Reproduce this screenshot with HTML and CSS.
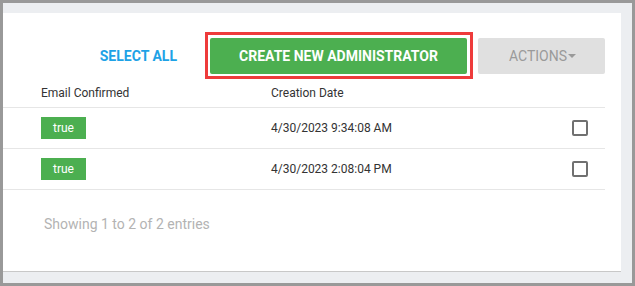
FILE: index.html
```html
<!DOCTYPE html>
<html>
<head>
<meta charset="utf-8">
<link rel="stylesheet" href="styles.css">
</head>
<body>
<div class="frame">
  <div class="panel">
    <div class="toolbar">
      <a class="select-all">SELECT ALL</a>
      <div class="highlight">
        <button class="btn-create">CREATE NEW ADMINISTRATOR</button>
      </div>
      <button class="btn-actions">ACTIONS<span class="caret"></span></button>
    </div>
    <div class="table">
      <div class="row head">
        <div class="cell c1">Email Confirmed</div>
        <div class="cell c2">Creation Date</div>
        <div class="cell c3"></div>
      </div>
      <div class="row">
        <div class="cell c1"><span class="badge">true</span></div>
        <div class="cell c2">4/30/2023 9:34:08 AM</div>
        <div class="cell c3"><span class="check"></span></div>
      </div>
      <div class="row">
        <div class="cell c1"><span class="badge">true</span></div>
        <div class="cell c2">4/30/2023 2:08:04 PM</div>
        <div class="cell c3"><span class="check"></span></div>
      </div>
    </div>
    <div class="footer">Showing 1 to 2 of 2 entries</div>
  </div>
</div>
</body>
</html>
```
FILE: styles.css
```css
* { box-sizing: border-box; }
html, body { margin: 0; padding: 0; }
body {
  font-family: Roboto, "Noto Sans", Arial, sans-serif;
  background: #999999;
  width: 635px;
  height: 286px;
  overflow: hidden;
}
.frame {
  width: 635px;
  height: 286px;
  border: 3px solid #999999;
  background: #eceef1;
  padding: 10px 10px 0 0;
}
.panel {
  width: 618px;
  height: 259px;
  background: #ffffff;
  border-bottom: 1px solid #c8c8c8;
  padding: 19px 16px 0 0;
}
.toolbar {
  display: flex;
  align-items: center;
  justify-content: flex-end;
  height: 47px;
}
.select-all {
  color: #1ea2e6;
  font-weight: 700;
  font-size: 14px;
  margin-right: 28px;
}
.highlight {
  border: 3px solid #ee3b3b;
  padding: 3px 3px 2px 2px;
  margin-right: 5px;
}
.btn-create {
  display: block;
  width: 257px;
  height: 36px;
  border: none;
  border-radius: 2px;
  background: #4caf50;
  color: #ffffff;
  font-family: Roboto, Arial, sans-serif;
  font-weight: 700;
  font-size: 14px;
  padding: 0;
}
.btn-actions {
  display: flex;
  align-items: center;
  justify-content: center;
  width: 127px;
  height: 36px;
  border: none;
  border-radius: 2px;
  background: #e0e0e0;
  color: #9a9a9a;
  font-family: Roboto, Arial, sans-serif;
  font-size: 14px;
  padding: 0 0 0 2px;
}
.caret {
  display: inline-block;
  width: 0;
  height: 0;
  border-left: 4px solid transparent;
  border-right: 4px solid transparent;
  border-top: 4px solid #9a9a9a;
  margin-left: 1px;
}
.table {
  width: 602px;
}
.row {
  display: grid;
  grid-template-columns: 268px 1fr 33px;
  height: 41px;
  align-items: center;
  border-bottom: 1px solid #e6e6e6;
  font-size: 12px;
  color: #333333;
}
.row.head {
  height: 29px;
  font-size: 12px;
  color: #333333;
}
.cell.c1 { padding-left: 38px; }
.cell.c2 { padding-left: 0; }
.cell.c3 { display: flex; }
.badge {
  display: inline-flex;
  align-items: center;
  justify-content: center;
  width: 45px;
  height: 22px;
  background: #4caf50;
  color: #ffffff;
  font-size: 12px;
}
.check {
  display: block;
  width: 16px;
  height: 16px;
  border: 2px solid #707070;
  border-radius: 2px;
  margin-left: 0;
}
.footer {
  padding: 26px 0 0 41px;
  color: #b3b3b3;
  font-size: 14px;
}
```
